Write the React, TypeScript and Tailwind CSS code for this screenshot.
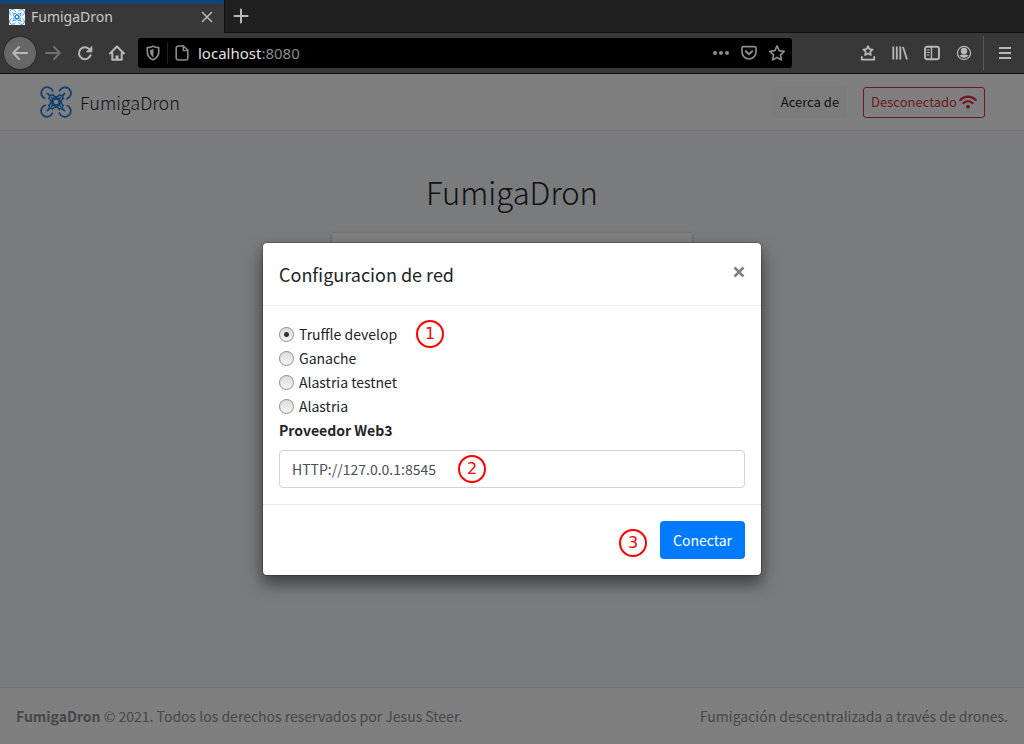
import { useState } from "react";
import type { ReactNode } from "react";

const NETWORKS = ["Truffle develop", "Ganache", "Alastria testnet", "Alastria"];

function Glyph({ children, className = "size-4" }: { children: ReactNode; className?: string }) {
  return (
    <svg
      viewBox="0 0 16 16"
      fill="none"
      stroke="currentColor"
      strokeWidth="2"
      strokeLinecap="round"
      strokeLinejoin="round"
      aria-hidden="true"
      className={className}
    >
      {children}
    </svg>
  );
}

function DroneLogo({ className }: { className: string }) {
  return (
    <svg viewBox="0 0 32 32" fill="none" stroke="currentColor" strokeLinecap="round" aria-hidden="true" className={className}>
      {[0, 90, 180, 270].map((angle) => (
        <g key={angle} transform={`rotate(${angle} 16 16)`} strokeWidth="1.8">
          <path d="M4.600 12.300A5.900 5.900 0 1 1 12.700 5" />
          <path d="M7.400 7.400L9.600 9.200" />
          <path d="M9.400 9C10.400 10.200 9.800 11.600 8.600 12.400" strokeWidth="1.500" />
          <path d="M9.400 9C10.600 10 12 9.600 12.800 8.400" strokeWidth="1.500" />
          <path d="M12.700 9C14.200 11.400 17.800 11.400 19.300 9" strokeWidth="1.500" />
        </g>
      ))}
      <circle cx="16" cy="16" r="3.700" strokeWidth="2.800" />
      <path d="M11.800 11.800l1.200 1.200M20.200 11.800l-1.200 1.200M11.800 20.200l1.200-1.200M20.200 20.200l-1.200-1.200" strokeWidth="1.800" />
    </svg>
  );
}

function ToolButton({ label, children, className = "" }: { label: string; children: ReactNode; className?: string }) {
  return (
    <button type="button" aria-label={label} className={`flex size-8 shrink-0 items-center justify-center ${className}`}>
      {children}
    </button>
  );
}

function BrowserChrome() {
  return (
    <div className="shrink-0 font-['Noto_Sans',sans-serif] text-[#b8b8b8]">
      <div className="flex h-[33px] bg-[#202020]">
        <div className="flex w-56 items-center gap-[6px] border-t-[3px] border-[#07488a] bg-[#383838] pr-[11px] pb-[2px] pl-[9px]">
          <DroneLogo className="size-4 bg-white text-[#1e88f0]" />
          <span className="flex-1 text-sm text-[#c8c8c8]">FumigaDron</span>
          <button type="button" aria-label="Cerrar" className="flex size-3">
            <Glyph className="size-3">
              <path d="M2 2l12 12M14 2L2 14" />
            </Glyph>
          </button>
        </div>
        <div className="flex flex-1 border-b border-l border-[#111111]">
          <ToolButton label="Nueva">
            <Glyph>
              <path d="M8 1.500v13M1.500 8h13" />
            </Glyph>
          </ToolButton>
        </div>
      </div>

      <div className="flex h-[41px] items-center border-b border-[#111111] bg-[#383838] pr-[3px] pl-1">
        <ToolButton label="Atrás" className="mr-px rounded-full bg-[#676767] ring-1 ring-[#2c2c2c]">
          <Glyph>
            <path d="M15 8H1.500M7 2L1.200 8L7 14" />
          </Glyph>
        </ToolButton>
        <ToolButton label="Adelante" className="text-[#707070]">
          <Glyph>
            <path d="M1 8h13.500M9 2l5.800 6L9 14" />
          </Glyph>
        </ToolButton>
        <ToolButton label="Recargar">
          <Glyph>
            <path d="M13.600 10.200A6 6 0 1 1 12.600 4.400" />
            <path d="M15 1.500v5.500H9.500z" fill="currentColor" strokeWidth="0.600" />
          </Glyph>
        </ToolButton>
        <ToolButton label="Inicio">
          <Glyph>
            <path d="M1 8.500L8 1.500l7 7M3.300 8v6.800h9.400V8" />
            <path d="M8 14.500v-4" strokeWidth="3" strokeLinecap="butt" />
          </Glyph>
        </ToolButton>

        <div className="mr-[60px] ml-[5px] flex h-[30px] flex-1 items-center rounded-[3px] bg-black px-[7px] text-[#8c8c8c]">
          <Glyph>
            <path d="M8 1.300C6 2.300 4.300 2.600 2.300 2.700V7c0 4 2.400 6.400 5.700 7.800C11.300 13.400 13.700 11 13.700 7V2.700C11.700 2.600 10 2.300 8 1.300z" strokeWidth="1.700" />
            <path d="M8 4.300v7.400C6 10.500 5 9 5 7V5z" fill="currentColor" stroke="none" />
            <path d="M8 4.300v7.400" strokeWidth="1" />
          </Glyph>
          <span className="mx-[6px] h-[22px] w-px bg-[#222222]" />
          <Glyph>
            <path d="M9.500 1H4.200A2 2 0 0 0 2.200 3v10a2 2 0 0 0 2 2h7.600a2 2 0 0 0 2-2V5.300z" strokeWidth="1.600" />
            <path d="M9.300 1v4.600h4.500" strokeWidth="1.400" />
          </Glyph>
          <span className="ml-2 flex-1 text-[15px]">
            <span className="text-[#e2e2e2]">localhost</span>:8080
          </span>
          <span className="flex items-center gap-3">
            <Glyph>
              <g fill="currentColor" stroke="none">
                <circle cx="2" cy="8" r="2" />
                <circle cx="8" cy="8" r="2" />
                <circle cx="14" cy="8" r="2" />
              </g>
            </Glyph>
            <Glyph>
              <path d="M2.500 1.700h11a1.500 1.500 0 0 1 1.500 1.500V7A7 7 0 0 1 1 7V3.200a1.500 1.500 0 0 1 1.500-1.500z" strokeWidth="1.700" />
              <path d="M4.800 6.200L8 9.300l3.200-3.100" />
            </Glyph>
            <Glyph>
              <path d="M8 1l2.150 4.700 5 .6-3.700 3.500 1 5.100L8 12.400l-4.450 2.500 1-5.100L.85 6.300l5-.6z" strokeWidth="1.700" />
            </Glyph>
          </span>
        </div>

        <ToolButton label="Marcadores">
          <Glyph>
            <path d="M8 1.200l1.400 3 3.200.4-2.400 2.200.7 3.200L8 8.400 5.100 10l.7-3.200-2.400-2.200 3.200-.4z" strokeWidth="1.700" />
            <path d="M1.800 12v2.700h12.400V12" strokeWidth="1.800" />
          </Glyph>
        </ToolButton>
        <ToolButton label="Biblioteca">
          <Glyph>
            <path d="M1.300 1.500v13M4.800 1.500v13M8.300 1.500v13M11 2l4 12.500" strokeWidth="1.800" strokeLinecap="butt" />
          </Glyph>
        </ToolButton>
        <ToolButton label="Barra lateral">
          <Glyph>
            <rect x="1" y="1.800" width="14" height="12.400" rx="2" strokeWidth="1.900" />
            <path d="M7.500 2v12" strokeWidth="1.400" />
            <path d="M3 5h2.500M3 7.500h2.500M3 10h2" strokeWidth="1" />
          </Glyph>
        </ToolButton>
        <ToolButton label="Cuenta">
          <Glyph>
            <circle cx="8" cy="8" r="6.600" strokeWidth="1.200" />
            <circle cx="8" cy="6" r="3.200" fill="currentColor" stroke="none" />
            <path d="M3.400 10.200c1.200.1 2.200-.2 2.800-.7h3.600c.6.500 1.600.8 2.800.7A5.200 5.200 0 0 1 3.400 10.200z" fill="currentColor" stroke="none" />
          </Glyph>
        </ToolButton>
        <span className="mr-[5px] ml-[3px] h-[34px] w-px bg-[#5a5a5a]" />
        <ToolButton label="Menú">
          <Glyph>
            <path d="M2 3h12M2 8h12M2 13h12" strokeLinecap="butt" />
          </Glyph>
        </ToolButton>
      </div>
    </div>
  );
}

function WifiIcon() {
  return (
    <svg viewBox="0 0 18 14" fill="none" stroke="currentColor" strokeWidth="2.200" strokeLinecap="round" aria-hidden="true" className="h-[14px] w-[18px]">
      <path d="M1.300 5C5.600.6 12.400.6 16.700 5" />
      <path d="M4.300 8.200c2.700-2.600 6.700-2.600 9.400 0" />
      <circle cx="9" cy="11.700" r="1.900" fill="currentColor" stroke="none" />
    </svg>
  );
}

function Step({ number, className }: { number: number; className: string }) {
  return (
    <span
      className={`absolute flex size-7 items-center justify-center rounded-full border-2 border-[#ff0000] font-['DejaVu_Sans',sans-serif] text-base leading-none text-[#ff0000] ${className}`}
    >
      {number}
    </span>
  );
}

function NetworkDialog() {
  const [network, setNetwork] = useState(NETWORKS[0]);
  const [provider, setProvider] = useState("HTTP://127.0.0.1:8545");

  return (
    <div
      role="dialog"
      aria-modal="true"
      aria-labelledby="dialog-title"
      className="relative w-full max-w-[500px] rounded-[5px] border border-black/20 bg-white bg-clip-padding shadow-[0_8px_16px_rgba(0,0,0,0.5)]"
    >
      <div className="flex items-start justify-between border-b border-[#e9ecef] p-4">
        <h2 id="dialog-title" className="text-lg leading-[30px]">
          Configuracion de red
        </h2>
        <button type="button" aria-label="Cerrar" className="flex h-[26px] w-3 items-center justify-center text-[#7f7f7f]">
          <Glyph className="size-3">
            <path d="M2 2l12 12M14 2L2 14" strokeWidth="3.400" strokeLinecap="butt" />
          </Glyph>
        </button>
      </div>

      <form className="p-4 leading-6">
        {NETWORKS.map((name) => (
          <label key={name} className="flex items-center gap-[5px]">
            <input
              type="radio"
              name="network"
              checked={network === name}
              onChange={() => setNetwork(name)}
              className="size-[15px] appearance-none rounded-full border border-[#8e8e8e] bg-[linear-gradient(#dcdcdc,#f4f4f4)] checked:bg-[radial-gradient(circle,#2e3436_2px,transparent_3px),linear-gradient(#dcdcdc,#f4f4f4)]"
            />
            {name}
          </label>
        ))}
        <label htmlFor="provider" className="mb-2 block font-bold">
          Proveedor Web3
        </label>
        <input
          id="provider"
          type="text"
          value={provider}
          onChange={(event) => setProvider(event.target.value)}
          className="block h-[38px] w-full rounded-sm border border-[#ced4da] bg-white px-3 text-[#495057]"
        />
      </form>

      <div className="flex justify-end border-t border-[#e9ecef] p-4">
        <button type="button" className="h-[38px] rounded-[4px] bg-[#007bff] px-[13px] text-white">
          Conectar
        </button>
      </div>

      <Step number={1} className="top-[77px] left-[153px]" />
      <Step number={2} className="top-[212px] left-[195px]" />
      <Step number={3} className="right-[114px] bottom-[18px]" />
    </div>
  );
}

export default function App() {
  return (
    <div className="flex min-h-screen flex-col">
      <BrowserChrome />
      <div className="relative flex flex-1 flex-col bg-[#f4f6f9] font-['Noto_Sans_CJK_SC','Source_Sans_Pro',sans-serif] text-sm text-[#212529]">
        <header className="flex h-[57px] items-center justify-between border-b border-[#dee2e6] bg-white pr-[39px] pl-10">
          <a href="#inicio" className="flex items-center gap-2 text-lg font-light">
            <DroneLogo className="size-8 text-[#2684e0]" />
            FumigaDron
          </a>
          <nav className="flex items-center gap-4 text-[13px]">
            <a href="#acerca" className="flex h-[31px] items-center rounded-[3px] bg-[#f8f9fa] px-2">
              Acerca de
            </a>
            <button type="button" className="flex h-[31px] items-center gap-[2px] rounded-[3px] border border-[#dc3545] px-[7px] text-[#dc3545]">
              Desconectado
              <WifiIcon />
            </button>
          </nav>
        </header>

        <main className="flex flex-1 flex-col items-center pt-9">
          <h1 className="mb-4 text-[31px] leading-[50px] font-light">FumigaDron</h1>
          <div className="h-80 w-full max-w-[360px] bg-white shadow-[0_0_1px_rgba(0,0,0,0.125),0_1px_3px_rgba(0,0,0,0.2)]" />
        </main>

        <footer className="flex justify-between border-t border-[#dee2e6] bg-white p-4 leading-6 text-[#869099]">
          <p>
            <strong>FumigaDron</strong> © 2021. Todos los derechos reservados por Jesus Steer.
          </p>
          <p>Fumigación descentralizada a través de drones.</p>
        </footer>

        <div className="absolute inset-0 flex items-center justify-center bg-black/50">
          <NetworkDialog />
        </div>
      </div>
    </div>
  );
}
